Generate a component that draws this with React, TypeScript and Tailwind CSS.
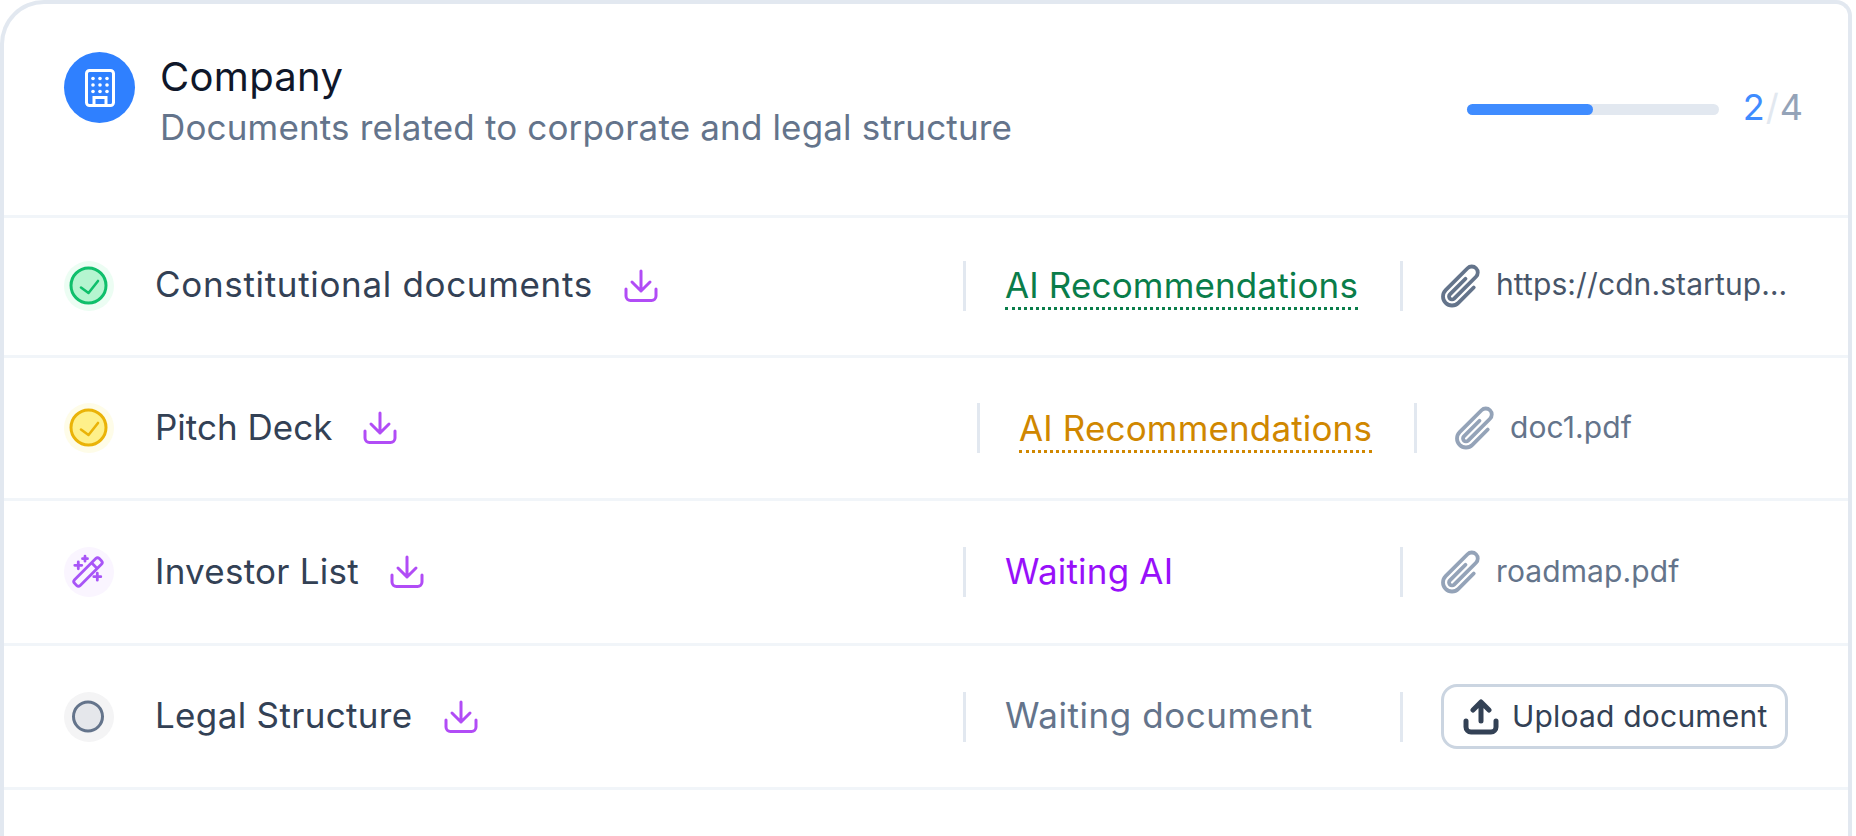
const DownloadIcon = () => (
  <svg width="34" height="34" viewBox="0 0 34 34" fill="none" stroke="#b14cf6" strokeWidth="3" strokeLinecap="round" strokeLinejoin="round" className="shrink-0">
    <path d="M17 2v20M8 13l9 9 9-9" />
    <path d="M2 20v7a4.5 4.5 0 0 0 4.500 4.500h21a4.500 4.500 0 0 0 4.500-4.500v-7" />
  </svg>
)

const ClipIcon = ({ color }: { color: string }) => (
  <svg width="48" height="48" viewBox="0 0 24 24" fill="none" stroke={color} strokeWidth="1.9" strokeLinecap="round" strokeLinejoin="round" className="shrink-0">
    <path d="M18.375 12.739l-7.693 7.693a4.5 4.5 0 01-6.364-6.364l10.94-10.94A3 3 0 1119.5 7.372L8.552 18.32m.009-.01l-.01.01m5.699-9.941l-7.81 7.81a1.5 1.5 0 002.112 2.13" />
  </svg>
)

const BuildingIcon = () => (
  <svg width="30" height="38" viewBox="0 0 30 38" fill="none">
    <rect x="1.500" y="1.500" width="27" height="35" rx="3" stroke="white" strokeWidth="3" />
    <path d="M9 36v-7.500h12V36" stroke="white" strokeWidth="3" />
    {[9.500, 16, 22.500].map((y) =>
      [8, 15, 22].map((x) => <circle key={`${x}-${y}`} cx={x} cy={y} r="1.800" fill="white" />),
    )}
  </svg>
)

const CheckStatus = ({ halo, fill, stroke }: { halo: string; fill: string; stroke: string }) => (
  <svg width="50" height="50" viewBox="0 0 50 50" fill="none" className="shrink-0">
    <circle cx="25" cy="25" r="25" fill={halo} />
    <circle cx="24.500" cy="24.500" r="17.500" fill={fill} stroke={stroke} strokeWidth="3" />
    <path d="M17 26.500l7.500 5.500 9.500-12" stroke={stroke} strokeWidth="2.600" strokeLinecap="round" strokeLinejoin="round" />
  </svg>
)

const WandStatus = () => (
  <svg width="50" height="50" viewBox="0 0 50 50" fill="none" className="shrink-0">
    <circle cx="25" cy="25" r="25" fill="#faf5ff" />
    <g transform="rotate(-45 24 25)" stroke="#a855f7" strokeWidth="2.800">
      <rect x="6.500" y="21" width="35" height="8" rx="2.500" />
      <path d="M33 21v8" />
    </g>
    <path d="M14.300 14.800v7M10.800 18.300h7M33.300 26.200v7M29.800 29.700h7M21 9.200v5M18.500 11.700h5" stroke="#a855f7" strokeWidth="2.800" strokeLinecap="round" />
  </svg>
)

const WaitingStatus = () => (
  <svg width="50" height="50" viewBox="0 0 50 50" fill="none" className="shrink-0">
    <circle cx="25" cy="25" r="25" fill="#f4f4f5" />
    <circle cx="24" cy="24.500" r="14.500" fill="#e5e7eb" stroke="#64748b" strokeWidth="3" />
  </svg>
)

const Divider = () => <div className="h-[50px] w-[3px] shrink-0 bg-[#e2e8f0]" />

const Recommendation = ({ className }: { className: string }) => (
  <span className={`border-b-[3px] border-dotted pb-[1px] leading-[40px] tracking-[0.15px] ${className}`}>AI Recommendations</span>
)

const FileLink = ({ name, clip, className }: { name: string; clip: string; className: string }) => (
  <div className="flex items-center pl-[34px]">
    <ClipIcon color={clip} />
    <span className={`ml-[11px] pb-[2px] text-[30px] tracking-[0.1px] ${className}`}>{name}</span>
  </div>
)

const UploadButton = () => (
  <button className="ml-[38px] flex h-[65px] w-[347px] items-center rounded-[16px] border-[3px] border-[#cbd5e1] pl-[19px]">
    <svg width="36" height="36" viewBox="0 0 36 36" fill="none" stroke="#334155" strokeWidth="5" strokeLinecap="round" strokeLinejoin="round">
      <path d="M18 22V4M10 11l8-8 8 8" />
      <path d="M3 22v6a5 5 0 0 0 5 5h20a5 5 0 0 0 5-5v-6" />
    </svg>
    <span className="ml-[13px] text-[30px] tracking-[0.2px] text-[#334155]">Upload document</span>
  </button>
)

const App = () => {
  return (
    <div className="h-[836px] w-[1856px] overflow-hidden bg-white font-[Inter,sans-serif]">
      <div className="h-[860px] w-[1852px] rounded-tl-[44px] rounded-tr-[16px] border-x-4 border-t-4 border-[#e2e8f0]">
        <div className="flex h-[211px] items-start justify-between pt-[48px] pl-[60px] pr-[44px]">
          <div className="flex">
            <div className="flex h-[71px] w-[71px] items-center justify-center rounded-full bg-[#2f80ff]">
              <BuildingIcon />
            </div>
            <div className="ml-[25px] mt-[2px]">
              <div className="text-[40px] leading-[46px] tracking-[0.3px] text-[#0f172a]">Company</div>
              <div className="mt-[4px] text-[35px] leading-[46px] tracking-[0.16px] text-[#64748b]">
                Documents related to corporate and legal structure
              </div>
            </div>
          </div>
          <div className="mt-[35px] flex items-center">
            <div className="h-[11px] w-[252px] rounded-full bg-[#e2e8f0]">
              <div className="h-full w-1/2 rounded-full bg-[#3f8cff]" />
            </div>
            <div className="ml-[24px] pb-[4px] text-[36px] leading-[40px] tracking-[1px]">
              <span className="text-[#3f8cff]">2</span>
              <span className="text-[#e2e8f0]">/</span>
              <span className="text-[#94a3b8]">4</span>
            </div>
          </div>
        </div>

        <div className="flex h-[143px] items-center border-y-[3px] border-[#f1f5f9] pb-[2px] pl-[60px]">
          <CheckStatus halo="#ecfdf3" fill="#b5f5d0" stroke="#0fbf6b" />
          <span className="ml-[41px] pb-[2px] text-[35px] tracking-[0.67px] text-[#334155]">Constitutional documents</span>
          <div className="ml-[31px]"><DownloadIcon /></div>
          <div className="flex-1" />
          <Divider />
          <div className="w-[434px] pl-[39px] text-[35px]">
            <Recommendation className="border-[#0a7d4a] text-[#0a7d4a]" />
          </div>
          <Divider />
          <div className="w-[445px]">
            <FileLink name="https://cdn.startup…" clip="#64748b" className="text-[#475569]" />
          </div>
        </div>

        <div className="flex h-[143px] items-center border-b-[3px] border-[#f1f5f9] pl-[60px]">
          <CheckStatus halo="#fefce8" fill="#fef08a" stroke="#eab308" />
          <span className="ml-[41px] pb-[2px] text-[35px] text-[#334155]">Pitch Deck</span>
          <div className="ml-[31px]"><DownloadIcon /></div>
          <div className="flex-1" />
          <Divider />
          <div className="w-[434px] pl-[39px] text-[35px]">
            <Recommendation className="border-[#d08700] text-[#d08700]" />
          </div>
          <Divider />
          <div className="w-[431px]">
            <FileLink name="doc1.pdf" clip="#94a3b8" className="text-[#64748b]" />
          </div>
        </div>

        <div className="flex h-[145px] items-center border-b-[3px] border-[#f1f5f9] pl-[60px]">
          <WandStatus />
          <span className="ml-[41px] pb-[2px] text-[35px] tracking-[0.25px] text-[#334155]">Investor List</span>
          <div className="ml-[31px]"><DownloadIcon /></div>
          <div className="flex-1" />
          <Divider />
          <div className="w-[434px] pb-[2px] pl-[39px] text-[35px] tracking-[0.2px] text-[#9810fa]">Waiting AI</div>
          <Divider />
          <div className="w-[445px]">
            <FileLink name="roadmap.pdf" clip="#94a3b8" className="text-[#64748b]" />
          </div>
        </div>

        <div className="flex h-[144px] items-center border-b-[3px] border-[#f1f5f9] pl-[60px]">
          <WaitingStatus />
          <span className="ml-[41px] pb-[2px] text-[35px] tracking-[0.33px] text-[#334155]">Legal Structure</span>
          <div className="ml-[31px]"><DownloadIcon /></div>
          <div className="flex-1" />
          <Divider />
          <div className="w-[434px] pb-[2px] pl-[39px] text-[35px] tracking-[0.55px] text-[#64748b]">Waiting document</div>
          <Divider />
          <div className="w-[445px]">
            <UploadButton />
          </div>
        </div>
      </div>
    </div>
  )
}

export default App
